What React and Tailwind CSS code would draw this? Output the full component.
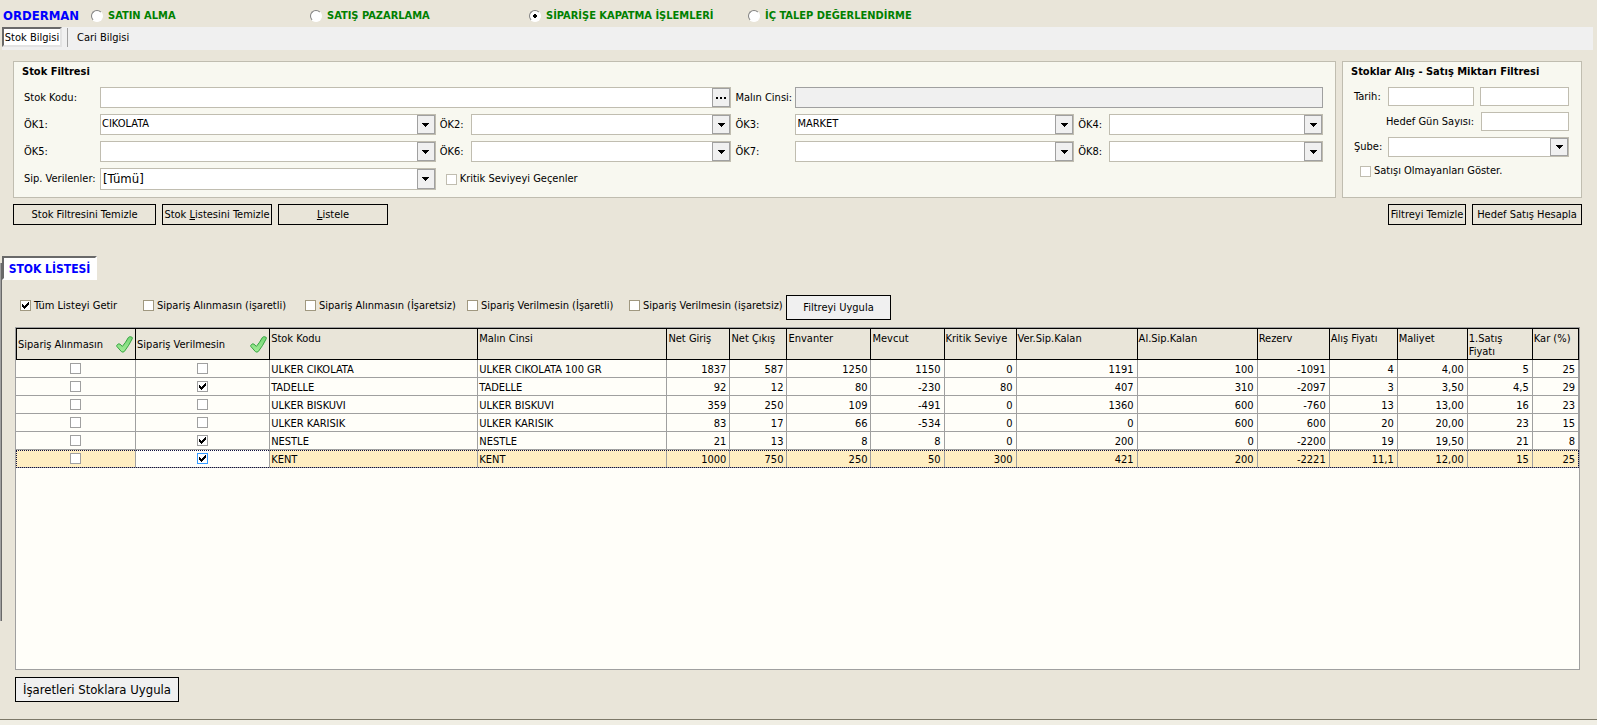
import React from "react";

const DOT_ARROW = (
  <svg width="7" height="4" viewBox="0 0 7 4" shapeRendering="crispEdges" aria-hidden="true">
    <path d="M0 0h7v1H0zM1 1h5v1H1zM2 2h3v1H2zM3 3h1v1H3z" fill="#000" />
  </svg>
);

function Tick({ id, label, checked, tone = "border-[#c0bdb0]", className = "" }) {
  return (
    <label className={`flex items-center gap-[3px] whitespace-nowrap ${className}`}>
      <Box id={id} checked={checked} tone={tone} />
      {label}
    </label>
  );
}

function Box({ id, checked, tone, label }) {
  return (
    <span className="grid size-[11px] shrink-0 place-items-center">
      <input
        id={id}
        type="checkbox"
        defaultChecked={checked}
        aria-label={label}
        className={`peer col-start-1 row-start-1 m-0 size-[11px] appearance-none border bg-white ${tone}`}
      />
      <svg
        className="pointer-events-none col-start-1 row-start-1 hidden peer-checked:block"
        width="7"
        height="7"
        viewBox="0 0 7 7"
        shapeRendering="crispEdges"
        aria-hidden="true"
      >
        <path d="M0 2h1v3H0zM1 3h1v3H1zM2 4h1v3H2zM3 3h1v3H3zM4 2h1v3H4zM5 1h1v3H5zM6 0h1v3H6z" fill="#000" />
      </svg>
    </span>
  );
}

function Combo({ id, value = "", big }) {
  return (
    <div className="grid min-w-0">
      <select
        id={id}
        defaultValue={value}
        className={`col-start-1 row-start-1 w-full min-w-0 appearance-none border border-[#c0bdb0] bg-white pr-5 ${
          big ? "pl-[2px] text-[13px] leading-4" : "pl-px pb-[2px] leading-4"
        }`}
      >
        <option value={value}>{value}</option>
      </select>
      <span className="pointer-events-none col-start-1 row-start-1 m-px grid w-[18px] place-items-center justify-self-end border border-[#a0a0a0] bg-[#f0f0f0]">
        {DOT_ARROW}
      </span>
    </div>
  );
}

function FieldLabel({ htmlFor, children, first }) {
  return (
    <label htmlFor={htmlFor} className={`self-center whitespace-nowrap ${first ? "" : "pl-1"}`}>
      {children}
    </label>
  );
}

function PushButton({ children, className = "" }) {
  return (
    <button type="button" className={`flex items-center justify-center border border-black whitespace-nowrap ${className}`}>
      {children}
    </button>
  );
}

function GreenCheck() {
  return (
    <svg width="17" height="17" viewBox="0 0 17 17" className="shrink-0" aria-hidden="true">
      <defs>
        <linearGradient id="leaf" x1="0" y1="0" x2="0" y2="1">
          <stop offset="0" stopColor="#74d674" />
          <stop offset="1" stopColor="#a2ec96" />
        </linearGradient>
      </defs>
      <path
        d="M12.3 1.6 Q13.2 0.5 14.6 0.7 L16.2 1.4 Q16.6 2 16.2 2.8 Q13 9.5 8.4 15.4 Q7 16.8 5.4 15.6 L0.8 10.4 Q0.4 9.4 1.4 8.6 Q2.8 7.2 4 8.2 L6.4 10.4 Q9.8 6.4 12.3 1.6 Z"
        fill="url(#leaf)"
        stroke="#36a340"
        strokeWidth="1"
        strokeLinejoin="round"
      />
    </svg>
  );
}

const MODES = [
  ["SATIN ALMA", "w-[219px]"],
  ["SATIŞ PAZARLAMA", "w-[219px]"],
  ["SİPARİŞE KAPATMA İŞLEMLERİ", "w-[219px]"],
  ["İÇ TALEP DEĞERLENDİRME", ""],
];

const LIST_FILTERS = [
  ["Tüm Listeyi Getir", "w-[123px]", true],
  ["Sipariş Alınmasın (işaretli)", "w-[162px]", false],
  ["Sipariş Alınmasın (İşaretsiz)", "w-[162px]", false],
  ["Sipariş Verilmesin (İşaretli)", "w-[162px]", false],
  ["Sipariş Verilmesin (işaretsiz)", "w-[157px]", false],
];

const COLUMNS = [
  ["Sipariş Alınmasın", "w-[120px]"],
  ["Sipariş Verilmesin", "w-[134px]"],
  ["Stok Kodu", "w-[208px]"],
  ["Malın Cinsi", "w-[189px]"],
  ["Net Giriş", "w-[63px]"],
  ["Net Çıkış", "w-[57px]"],
  ["Envanter", "w-[84px]"],
  ["Mevcut", "w-[73px]"],
  ["Kritik Seviye", "w-[72px]"],
  ["Ver.Sip.Kalan", "w-[121px]"],
  ["Al.Sip.Kalan", "w-[120px]"],
  ["Rezerv", "w-[72px]"],
  ["Alış Fiyatı", "w-[68px]"],
  ["Maliyet", "w-[70px]"],
  ["1.Satış Fiyatı", "w-[65px]"],
  ["Kar (%)", "w-[46px]"],
];

const ROWS = [
  [false, false, "ULKER CIKOLATA", "ULKER CIKOLATA 100 GR", "1837", "587", "1250", "1150", "0", "1191", "100", "-1091", "4", "4,00", "5", "25"],
  [false, true, "TADELLE", "TADELLE", "92", "12", "80", "-230", "80", "407", "310", "-2097", "3", "3,50", "4,5", "29"],
  [false, false, "ULKER BISKUVI", "ULKER BISKUVI", "359", "250", "109", "-491", "0", "1360", "600", "-760", "13", "13,00", "16", "23"],
  [false, false, "ULKER KARISIK", "ULKER KARISIK", "83", "17", "66", "-534", "0", "0", "600", "600", "20", "20,00", "23", "15"],
  [false, true, "NESTLE", "NESTLE", "21", "13", "8", "8", "0", "200", "0", "-2200", "19", "19,50", "21", "8"],
  [false, true, "KENT", "KENT", "1000", "750", "250", "50", "300", "421", "200", "-2221", "11,1", "12,00", "15", "25"],
];

function StockTable() {
  const last = ROWS.length - 1;
  return (
    <table className="w-full table-fixed border-separate border-spacing-0 border-t border-black">
      <colgroup>
        {COLUMNS.map(([name, width]) => (
          <col key={name} className={width} />
        ))}
      </colgroup>
      <thead>
        <tr className="h-[31px] bg-[#e9e5d9]">
          {COLUMNS.map(([name], i) => (
            <th
              key={name}
              scope="col"
              className={`border-r border-b border-black p-0 pr-[2px] pl-px text-left font-normal leading-[13px] ${
                i === 0 ? "border-l align-middle" : i === 1 ? "align-middle" : "pt-[3px] align-top"
              }`}
            >
              {i < 2 ? (
                <span className="flex items-center justify-between whitespace-nowrap">
                  {name}
                  <GreenCheck />
                </span>
              ) : (
                name
              )}
            </th>
          ))}
        </tr>
      </thead>
      <tbody>
        {ROWS.map((row, r) => (
          <tr
            key={row[2]}
            className={`h-[18px] ${r === last ? "bg-[#ffeec2] outline-1 -outline-offset-1 outline-dotted outline-[#101040]" : ""}`}
          >
            {row.map((cell, c) => (
              <td
                key={c}
                className={`overflow-hidden border-r border-b border-[#a0a0a0] p-0 whitespace-nowrap ${
                  c < 2 ? "" : c < 4 ? "pt-[3px] pl-px" : "pt-[3px] pr-[3px] text-right"
                } ${r === last && c === 1 ? "bg-[#fffef9]" : ""}`}
              >
                {c < 2 ? (
                  <span className="flex justify-center">
                    <Box
                      checked={cell}
                      label={`${row[2]} – ${COLUMNS[c][0]}`}
                      tone={r === last && c === 1 ? "border-[#3399ff]" : "border-[#a0a0a0]"}
                    />
                  </span>
                ) : (
                  cell
                )}
              </td>
            ))}
          </tr>
        ))}
      </tbody>
    </table>
  );
}

const inputTone = "min-w-0 border border-[#c0bdb0] bg-white px-1";

export default function App() {
  return (
    <div className="min-h-screen bg-white pr-[2px] font-['DejaVu_Sans_Condensed','DejaVu_Sans',sans-serif] text-[11px] leading-[14px] text-black">
      <div className="flex min-h-screen flex-col bg-[#e9e5d9]">
        <header className="flex h-[27px] items-center pt-1 pl-[3px]">
          <h1 className="w-[88px] text-[13px] font-bold text-[#0000ff]">ORDERMAN</h1>
          {MODES.map(([name, width], i) => (
            <label key={name} className={`flex items-center gap-[5px] font-bold whitespace-nowrap text-[#008000] ${width}`}>
              <input
                type="radio"
                name="mode"
                defaultChecked={i === 2}
                className="m-0 size-3 shrink-0 appearance-none rounded-full border border-t-[#808080] border-r-white border-b-white border-l-[#808080] bg-white checked:bg-[radial-gradient(circle,#000_2px,transparent_2px)]"
              />
              {name}
            </label>
          ))}
        </header>

        <nav className="mr-1 ml-[2px] flex h-[23px] items-start bg-[#f0f0f0]">
          <button type="button" className="flex h-5 w-[60px] items-center justify-center border-2 border-t-[#696969] border-r-[#e3e3e3] border-b-[#e3e3e3] border-l-[#696969] bg-white pt-[2px] whitespace-nowrap">
            Stok Bilgisi
          </button>
          <span className="mt-px ml-[5px] h-[19px] border-l border-[#a0a0a0]" />
          <button type="button" className="ml-[9px] flex h-5 items-center pt-px whitespace-nowrap">
            Cari Bilgisi
          </button>
        </nav>

        <section className="mt-[11px] flex gap-[6px] pr-[15px] pl-[13px]">
          <fieldset className="min-w-0 flex-1 border border-[#c0bdb0] bg-[#f8f8f0] pt-[2px] pr-3 pb-[7px] pl-[10px]">
            <h2 className="-ml-[2px] mb-[7px] h-4 text-[11px] leading-4 font-bold">Stok Filtresi</h2>
            <div className="grid grid-cols-[76px_336fr_35px_261fr_64px_279fr_35px_214fr] grid-rows-[21px_21px_21px_22px] gap-y-[6px]">
              <FieldLabel htmlFor="kod" first>Stok Kodu:</FieldLabel>
              <div className="col-span-3 flex border border-[#c0bdb0] bg-white">
                <input id="kod" type="text" className="min-w-0 flex-1 px-1" />
                <button type="button" aria-label="Stok seç" className="flex w-[18px] items-center justify-center gap-[2px] border border-[#a0a0a0] bg-[#f0f0f0]">
                  <span className="size-[2px] bg-black" />
                  <span className="size-[2px] bg-black" />
                  <span className="size-[2px] bg-black" />
                </button>
              </div>
              <FieldLabel htmlFor="cins">Malın Cinsi:</FieldLabel>
              <input id="cins" type="text" readOnly className="col-span-3 border border-[#a0a0a0] bg-[#f0f0f0] px-1" />

              <FieldLabel htmlFor="ok1" first>ÖK1:</FieldLabel>
              <Combo id="ok1" value="CIKOLATA" />
              <FieldLabel htmlFor="ok2">ÖK2:</FieldLabel>
              <Combo id="ok2" />
              <FieldLabel htmlFor="ok3">ÖK3:</FieldLabel>
              <Combo id="ok3" value="MARKET" />
              <FieldLabel htmlFor="ok4">ÖK4:</FieldLabel>
              <Combo id="ok4" />

              <FieldLabel htmlFor="ok5" first>ÖK5:</FieldLabel>
              <Combo id="ok5" />
              <FieldLabel htmlFor="ok6">ÖK6:</FieldLabel>
              <Combo id="ok6" />
              <FieldLabel htmlFor="ok7">ÖK7:</FieldLabel>
              <Combo id="ok7" />
              <FieldLabel htmlFor="ok8">ÖK8:</FieldLabel>
              <Combo id="ok8" />

              <FieldLabel htmlFor="sip" first>Sip. Verilenler:</FieldLabel>
              <Combo id="sip" value="[Tümü]" big />
              <Tick label="Kritik Seviyeyi Geçenler" className="col-span-2 pl-[10px]" />
            </div>
          </fieldset>

          <fieldset className="w-[240px] shrink-0 border border-[#c0bdb0] bg-[#f8f8f0] pt-[2px] pr-3 pl-[11px]">
            <h2 className="-ml-[3px] mb-[7px] h-4 text-[11px] leading-4 font-bold whitespace-nowrap">Stoklar Alış - Satış Miktarı Filtresi</h2>
            <div className="flex flex-col gap-[6px]">
              <div className="grid h-[19px] grid-cols-[34px_86fr_95fr]">
                <label htmlFor="tarih1" className="self-center">Tarih:</label>
                <input id="tarih1" type="text" className={inputTone} />
                <input type="text" aria-label="Tarih bitiş" className={`ml-[6px] ${inputTone}`} />
              </div>
              <div className="flex h-[19px] justify-end gap-[7px]">
                <label htmlFor="gun" className="self-center whitespace-nowrap">Hedef Gün Sayısı:</label>
                <input id="gun" type="text" className={`w-[88px] ${inputTone}`} />
              </div>
              <div className="grid h-[19px] grid-cols-[34px_1fr] grid-rows-[19px]">
                <label htmlFor="sube" className="self-center">Şube:</label>
                <Combo id="sube" />
              </div>
              <Tick label="Satışı Olmayanları Göster." className="mt-[2px] pl-[6px]" />
            </div>
          </fieldset>
        </section>

        <div className="mt-[6px] flex h-[21px] gap-[6px] pr-[15px] pl-[13px]">
          <PushButton className="w-[143px]">Stok Filtresini Temizle</PushButton>
          <PushButton className="w-[110px]"><span>Stok <u>L</u>istesini Temizle</span></PushButton>
          <PushButton className="w-[110px]"><span><u>L</u>istele</span></PushButton>
          <PushButton className="ml-auto w-[78px]">Filtreyi Temizle</PushButton>
          <PushButton className="w-[110px]">Hedef Satış Hesapla</PushButton>
        </div>

        <section className="relative mt-[31px] flex flex-col">
          <span className="absolute top-[7px] left-0 h-[358px] w-[2px] border-r border-[#696969] bg-[#a0a0a0]" aria-hidden="true" />
          <h2 className="relative ml-[2px] flex h-6 w-[95px] items-center justify-center border-2 border-t-[#696969] border-r-white border-b-white border-l-[#696969] bg-white pt-px text-[12px] font-bold whitespace-nowrap text-[#0000ff]">
            STOK LİSTESİ
          </h2>
          <div className="mt-[15px] flex h-[25px] items-center pl-5">
            {LIST_FILTERS.map(([name, width, on]) => (
              <Tick key={name} label={name} checked={on} tone="border-[#a09880]" className={`pb-1 ${width}`} />
            ))}
            <PushButton className="h-[25px] w-[105px] bg-[#f0f0f0]">Filtreyi Uygula</PushButton>
          </div>
          <div className="mt-[7px] mr-[17px] ml-[15px] h-[343px] border border-[#a0a0a0] bg-[#fffef9]">
            <StockTable />
          </div>
          <PushButton className="mt-[7px] ml-[15px] h-[25px] w-[164px] bg-[#f0f0f0] text-[13px]">
            İşaretleri Stoklara Uygula
          </PushButton>
        </section>

        <footer className="mt-auto h-[6px] border-t border-[#7c7868] bg-[#f0eee4]" />
      </div>
    </div>
  );
}
